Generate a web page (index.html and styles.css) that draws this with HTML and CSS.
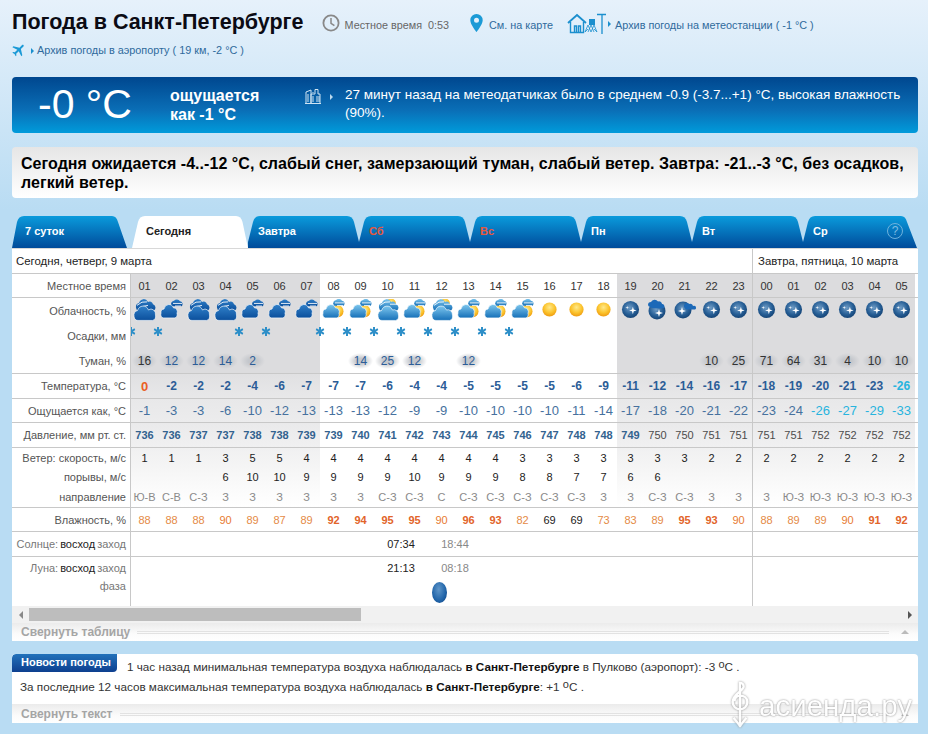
FILE: index.html
```html
<!DOCTYPE html>
<html lang="ru">
<head>
<meta charset="utf-8">
<title>Погода в Санкт-Петербурге</title>
<link rel="stylesheet" href="styles.css">
</head>
<body>
<svg class="defs" width="0" height="0" aria-hidden="true">
<defs>
<linearGradient id="gd" x1="0" y1="0" x2="0" y2="1"><stop offset="0" stop-color="#2f7fc8"/><stop offset="1" stop-color="#0b4f9c"/></linearGradient>
<linearGradient id="gl" x1="0" y1="0" x2="0" y2="1"><stop offset="0" stop-color="#7cc6ee"/><stop offset="1" stop-color="#1670b8"/></linearGradient>
<radialGradient id="gs" cx=".5" cy=".35" r=".65"><stop offset="0" stop-color="#ffe98a"/><stop offset=".6" stop-color="#fbc32c"/><stop offset="1" stop-color="#ee9a10"/></radialGradient>
<radialGradient id="gm" cx=".45" cy=".4" r=".65"><stop offset="0" stop-color="#6f9cc6"/><stop offset=".6" stop-color="#265e95"/><stop offset="1" stop-color="#123f70"/></radialGradient>
<symbol id="cb" viewBox="0 2.500 24 19" preserveAspectRatio="none">
<path fill="url(#gd)" d="M3 10a3.500 3.500 0 0 1 3-4 5 5 0 0 1 9-1 3.500 3.500 0 0 1 5 2 3 3 0 0 1 1 5.500H4z"/>
<path fill="none" stroke="#fff" stroke-width=".8" d="M4 8q5-4 10-3M7 11q3-3 8-3"/>
<path fill="url(#gd)" stroke="#fff" stroke-width=".6" d="M1 17.500a4 4 0 0 1 3.500-5 6 6 0 0 1 11-.5 4.500 4.500 0 0 1 7 4.500 3.500 3.500 0 0 1-3 4.500H5a4 4 0 0 1-4-3.500z"/>
</symbol>
<symbol id="cs" viewBox="0 2 24 18" preserveAspectRatio="none">
<path fill="url(#gd)" d="M11 7a3.500 3.500 0 0 1 3-3.500 4 4 0 0 1 6 .5 2.500 2.500 0 0 1 1.500 4.500H12z"/>
<path fill="none" stroke="#fff" stroke-width=".8" d="M13 6h9M15 8.300h6"/>
<path fill="url(#gd)" stroke="#fff" stroke-width=".6" d="M1 15a3.500 3.500 0 0 1 3-4 5 5 0 0 1 9.500-1 3.500 3.500 0 0 1 3.500 5 3 3 0 0 1-2 4H3a3 3 0 0 1-2-4z"/>
</symbol>
<symbol id="ds" viewBox="0 2 24 18" preserveAspectRatio="none">
<circle cx="16" cy="13" r="5.500" fill="url(#gs)"/>
<path fill="url(#gl)" d="M11 6a3.500 3.500 0 0 1 3-3 4 4 0 0 1 6 .5 2.500 2.500 0 0 1 1.500 4.500H12z"/>
<path fill="none" stroke="#fff" stroke-width=".8" d="M13 5.500h9M15 7.800h6"/>
<path fill="url(#gl)" stroke="#fff" stroke-width=".6" d="M1 15a3.500 3.500 0 0 1 3-4 5 5 0 0 1 9.500-1 3.500 3.500 0 0 1 3.500 5 3 3 0 0 1-2 4H3a3 3 0 0 1-2-4z"/>
</symbol>
<symbol id="db" viewBox="0 2.500 24 19" preserveAspectRatio="none">
<circle cx="15" cy="7" r="5" fill="url(#gs)"/>
<path fill="url(#gl)" d="M3 10a3.500 3.500 0 0 1 3-4 5 5 0 0 1 9-1 3.500 3.500 0 0 1 5 2 3 3 0 0 1 1 5.500H4z"/>
<path fill="none" stroke="#fff" stroke-width=".8" d="M4 8q5-4 10-3M14 7h8"/>
<path fill="url(#gl)" stroke="#fff" stroke-width=".6" d="M2 17.500a4 4 0 0 1 3.500-5 6 6 0 0 1 11-.5 4.500 4.500 0 0 1 6 4.500 3.500 3.500 0 0 1-3 4.500H6a4 4 0 0 1-4-3.500z"/>
</symbol>
<symbol id="sun" viewBox="0 0 18 18"><circle cx="9" cy="9" r="7.500" fill="url(#gs)"/></symbol>
<symbol id="mn" viewBox="0 0 20 20">
<circle cx="10" cy="10" r="9" fill="url(#gm)"/>
<path fill="#fff" d="M12.500 7l.9 3.100 3.100.9-3.100.9-.9 3.100-.9-3.100-3.100-.9 3.100-.9zM6.500 6l.4 1.600 1.600.4-1.600.4-.4 1.600-.4-1.600L4.500 8l1.600-.4z"/>
</symbol>
<symbol id="mc" viewBox="0 0 24 22">
<circle cx="11" cy="12" r="8.500" fill="url(#gm)"/>
<path fill="#fff" d="M13 10l.9 3.100 3.100.9-3.100.9-.9 3.100-.9-3.100-3.100-.9 3.100-.9z"/>
<path fill="#1c69b8" d="M2 6a3 3 0 0 1 3-3 4 4 0 0 1 7-.5 3 3 0 0 1 4 2.500 2.500 2.500 0 0 1 2 4l-3 .5-9-.5-2-1a2.500 2.500 0 0 1-2-2z"/>
</symbol>
<symbol id="ms" viewBox="0 0 24 20">
<circle cx="10" cy="11" r="8.500" fill="url(#gm)"/>
<path fill="#fff" d="M9 8l.9 3.100 3.100.9-3.100.9-.9 3.100-.9-3.100-3.100-.9 3.100-.9z"/>
<path fill="#1c69b8" d="M11 8a3 3 0 0 1 5-3 3 3 0 0 1 4 2 2 2 0 0 1 3 2 1.500 1.500 0 0 1-2 1.500h-8z"/>
</symbol>
<symbol id="fl" viewBox="0 0 9 9">
<path fill="none" stroke="#2e8fc8" stroke-width="2" d="M4.500 0v9M.6 2.200l7.800 4.600M.6 6.800l7.800-4.600"/>
</symbol>
</defs>
</svg>

<div class="page">
  <header class="head-main">
    <h1 class="title">Погода в Санкт-Петербурге</h1>
    <svg class="i-clock" viewBox="0 0 18 18"><circle cx="9" cy="9" r="7.600" fill="none" stroke="#888" stroke-width="1.800"/><path d="M9 4v5.300l3.400 2.400" fill="none" stroke="#888" stroke-width="1.500"/></svg>
    <span class="local">Местное время &nbsp;0:53</span>
    <svg class="i-pin" viewBox="0 0 13 18"><path fill="#1b9ad6" fill-rule="evenodd" d="M6.500 0a6.200 6.200 0 0 1 6.200 6.200C12.700 10.500 6.500 18 6.500 18S.3 10.500.3 6.200A6.200 6.200 0 0 1 6.500 0zm0 3.700a2.500 2.500 0 1 0 0 5 2.500 2.500 0 0 0 0-5z"/></svg>
    <a class="lnk map">См. на карте</a>
    <svg class="i-house" viewBox="0 0 40 22" fill="none" stroke="#1b8fce"><path stroke-width="1.800" d="M1 11l9-8 9 8"/><path stroke-width="1.400" d="M3.500 10v10.500h13V10M7.500 20v-6h2v6M11.500 20v-6h2v6"/><path fill="#1b8fce" stroke="none" d="M22 7h6v6h-6z"/><path stroke-width=".8" d="M18 20l3-7 3 7M21 20l3-7 3 7M24 20l3-7 3 7M18 20l3-3M30 20l-3-3"/><path stroke-width="1.300" d="M35 2v20M30 2.500h9"/></svg>
    <span class="tri"></span>
    <a class="lnk">Архив погоды на метеостанции ( -1 °C )</a>
  </header>
  <div class="head-sub">
    <svg class="i-plane" viewBox="0 0 24 24"><path fill="#1b9ad6" transform="rotate(45 12 12)" d="M21 16v-2l-8-5V3.500c0-.83-.67-1.500-1.500-1.500S10 2.670 10 3.500V9l-8 5v2l8-2.500V19l-2 1.500V22l3.500-1 3.500 1v-1.500L13 19v-5.500l8 2.500z"/></svg>
    <span class="tri"></span>
    <a class="lnk">Архив погоды в аэропорту ( 19 км, -2 °C )</a>
  </div>

  <section class="now">
    <div class="now-temp">-0 °C</div>
    <div class="now-feels">ощущается<br>как -1 °C</div>
    <svg class="i-bld" viewBox="0 0 16 16" fill="none" stroke="#cfe4f3" stroke-width="1"><path d="M1 15.500V4l5-2v13.500M6 15.500V6h4V1.500h3V6h2v9.500zM0 15.500h16M3 6v8M8 8v6M12 8v6M14 8v6M8 4v1"/></svg>
    <span class="tri tri-w"></span>
    <div class="now-text">27 минут назад на метеодатчиках было в среднем -0.9 (-3.7...+1) °C, высокая влажность (90%).</div>
  </section>

  <section class="summary">Сегодня ожидается -4..-12 °C, слабый снег, замерзающий туман, слабый ветер. Завтра: -21..-3 °C, без осадков, легкий ветер.</section>

  <nav class="tabs">
    <div class="tab tab-first">7 суток</div>
    <div class="tab tab-active">Сегодня</div>
    <div class="tab">Завтра</div>
    <div class="tab red">Сб</div>
    <div class="tab red">Вс</div>
    <div class="tab">Пн</div>
    <div class="tab">Вт</div>
    <div class="tab tab-last"><span>Ср</span><span class="help">?</span></div>
  </nav>

  <section class="table">
    <div class="dates"><div class="d1">Сегодня, четверг, 9 марта</div><div class="d2">Завтра, пятница, 10 марта</div></div>

    <div class="row hours line"><span class="lab">Местное время</span><span>01</span><span>02</span><span>03</span><span>04</span><span>05</span><span>06</span><span>07</span><span>08</span><span>09</span><span>10</span><span>11</span><span>12</span><span>13</span><span>14</span><span>15</span><span>16</span><span>17</span><span>18</span><span>19</span><span>20</span><span>21</span><span>22</span><span>23</span><span></span><span>00</span><span>01</span><span>02</span><span>03</span><span>04</span><span>05</span></div>

    <div class="row clouds"><span class="lab">Облачность, %</span>
      <span><svg class="big"><use href="#cb"/></svg></span><span><svg class="sm"><use href="#cs"/></svg></span><span><svg class="big"><use href="#cb"/></svg></span><span><svg class="big"><use href="#cb"/></svg></span><span><svg class="sm"><use href="#cs"/></svg></span><span><svg class="sm"><use href="#cs"/></svg></span><span><svg class="sm"><use href="#cs"/></svg></span>
      <span><svg class="sm"><use href="#ds"/></svg></span><span><svg class="sm"><use href="#ds"/></svg></span><span><svg class="big"><use href="#db"/></svg></span><span><svg class="sm"><use href="#ds"/></svg></span><span><svg class="big"><use href="#db"/></svg></span><span><svg class="sm"><use href="#ds"/></svg></span><span><svg class="sm"><use href="#ds"/></svg></span><span><svg class="sm"><use href="#ds"/></svg></span>
      <span><svg class="sun"><use href="#sun"/></svg></span><span><svg class="sun"><use href="#sun"/></svg></span><span><svg class="sun"><use href="#sun"/></svg></span>
      <span><svg class="moon"><use href="#mn"/></svg></span><span><svg class="big"><use href="#mc"/></svg></span><span><svg class="sm"><use href="#ms"/></svg></span><span><svg class="moon"><use href="#mn"/></svg></span><span><svg class="moon"><use href="#mn"/></svg></span><span></span>
      <span><svg class="moon"><use href="#mn"/></svg></span><span><svg class="moon"><use href="#mn"/></svg></span><span><svg class="moon"><use href="#mn"/></svg></span><span><svg class="moon"><use href="#mn"/></svg></span><span><svg class="moon"><use href="#mn"/></svg></span><span><svg class="moon"><use href="#mn"/></svg></span>
    </div>

    <div class="row precip"><span class="lab">Осадки, мм</span>
      <span><svg class="fl"><use href="#fl"/></svg></span><span><svg class="fl"><use href="#fl"/></svg></span><span></span><span></span><span><svg class="fl"><use href="#fl"/></svg></span><span><svg class="fl"><use href="#fl"/></svg></span><span></span>
      <span><svg class="fl"><use href="#fl"/></svg></span><span><svg class="fl"><use href="#fl"/></svg></span><span><svg class="fl"><use href="#fl"/></svg></span><span><svg class="fl"><use href="#fl"/></svg></span><span><svg class="fl"><use href="#fl"/></svg></span><span><svg class="fl"><use href="#fl"/></svg></span><span><svg class="fl"><use href="#fl"/></svg></span><span><svg class="fl"><use href="#fl"/></svg></span>
      <span></span><span></span><span></span><span></span><span></span><span></span><span></span><span></span><span></span><span></span><span></span><span></span><span></span><span></span><span></span>
    </div>

    <div class="row fogs line"><span class="lab">Туман, %</span><span><b class="dk">16</b></span><span><b>12</b></span><span><b>12</b></span><span><b>14</b></span><span><b>2</b></span><span></span><span></span><span></span><span><b>14</b></span><span><b>25</b></span><span><b>12</b></span><span></span><span><b>12</b></span><span></span><span></span><span></span><span></span><span></span><span></span><span></span><span></span><span><b class="dk">10</b></span><span><b class="dk">25</b></span><span></span><span><b class="dk">71</b></span><span><b class="dk">64</b></span><span><b class="dk">31</b></span><span><b class="dk">4</b></span><span><b class="dk">10</b></span><span><b class="dk">10</b></span></div>

    <div class="row temp line"><span class="lab">Температура, °C</span><span class="hot">0</span><span>-2</span><span>-2</span><span>-2</span><span>-4</span><span>-6</span><span>-7</span><span>-7</span><span>-7</span><span>-6</span><span>-4</span><span>-4</span><span>-5</span><span>-5</span><span>-5</span><span>-5</span><span>-6</span><span>-9</span><span>-11</span><span>-12</span><span>-14</span><span>-16</span><span>-17</span><span></span><span>-18</span><span>-19</span><span>-20</span><span>-21</span><span>-23</span><span class="ice">-26</span></div>

    <div class="row feels line"><span class="lab">Ощущается как, °C</span><span>-1</span><span>-3</span><span>-3</span><span>-6</span><span>-10</span><span>-12</span><span>-13</span><span>-13</span><span>-13</span><span>-12</span><span>-9</span><span>-9</span><span>-10</span><span>-10</span><span>-10</span><span>-10</span><span>-11</span><span>-14</span><span>-17</span><span>-18</span><span>-20</span><span>-21</span><span>-22</span><span></span><span>-23</span><span>-24</span><span class="ice">-26</span><span class="ice">-27</span><span class="ice">-29</span><span class="ice">-33</span></div>

    <div class="row press line"><span class="lab">Давление, мм рт. ст.</span><span>736</span><span>736</span><span>737</span><span>737</span><span>738</span><span>738</span><span>739</span><span>739</span><span>740</span><span>741</span><span>742</span><span>743</span><span>744</span><span>745</span><span>746</span><span>747</span><span>748</span><span>748</span><span>749</span><span class="lo">750</span><span class="lo">750</span><span class="lo">751</span><span class="lo">751</span><span></span><span class="lo">751</span><span class="lo">751</span><span class="lo">752</span><span class="lo">752</span><span class="lo">752</span><span class="lo">752</span></div>

    <div class="row wind w1"><span class="lab">Ветер: скорость, м/с</span><span>1</span><span>1</span><span>1</span><span>3</span><span>5</span><span>5</span><span>4</span><span>4</span><span>4</span><span>4</span><span>4</span><span>4</span><span>4</span><span>4</span><span>3</span><span>3</span><span>3</span><span>3</span><span>3</span><span>3</span><span>3</span><span>2</span><span>2</span><span></span><span>2</span><span>2</span><span>2</span><span>2</span><span>2</span><span>2</span></div>

    <div class="row wind w2"><span class="lab">порывы, м/с</span><span></span><span></span><span></span><span>6</span><span>10</span><span>10</span><span>9</span><span>9</span><span>9</span><span>9</span><span>10</span><span>9</span><span>9</span><span>9</span><span>8</span><span>8</span><span>7</span><span>7</span><span>6</span><span>6</span><span></span><span></span><span></span><span></span><span></span><span></span><span></span><span></span><span></span><span></span></div>

    <div class="row wind w3 line"><span class="lab">направление</span><span>Ю-В</span><span>С-В</span><span>С-З</span><span>З</span><span>З</span><span>З</span><span>З</span><span>З</span><span>З</span><span>С-З</span><span>С-З</span><span>С</span><span>С-З</span><span>С-З</span><span>С-З</span><span>С-З</span><span>С-З</span><span>З</span><span>З</span><span>С-З</span><span>С-З</span><span>З</span><span>З</span><span></span><span>З</span><span>Ю-З</span><span>Ю-З</span><span>Ю-З</span><span>Ю-З</span><span>Ю-З</span></div>

    <div class="row humid line"><span class="lab">Влажность, %</span><span>88</span><span>88</span><span>88</span><span class="h2">90</span><span>89</span><span>87</span><span>89</span><span class="h3">92</span><span class="h3">94</span><span class="h3">95</span><span class="h3">95</span><span class="h2">90</span><span class="h3">96</span><span class="h3">93</span><span>82</span><span class="dry">69</span><span class="dry">69</span><span>73</span><span>83</span><span>89</span><span class="h3">95</span><span class="h3">93</span><span class="h2">90</span><span></span><span>88</span><span>89</span><span>89</span><span class="h2">90</span><span class="h3">91</span><span class="h3">92</span></div>

    <div class="row astro line"><span class="lab"><em>Солнце:</em> восход <em>заход</em></span><span class="rise">07:34</span><span class="set">18:44</span><i class="div"></i></div>

    <div class="row astro moonrow"><span class="lab l1"><em>Луна:</em> восход <em>заход</em></span><span class="lab l2"><em>фаза</em></span><span class="rise">21:13</span><span class="set">08:18</span><i class="phase"></i><i class="div"></i></div>

    <div class="scroll"><span class="ar ar-l"></span><span class="thumb"></span><span class="ar ar-r"></span></div>
    <div class="fold"><span>Свернуть таблицу</span><i></i><span class="up"></span></div>
  </section>

  <section class="news">
    <div class="news-1"><span class="badge">Новости погоды</span><p>1 час назад минимальная температура воздуха наблюдалась <strong>в Санкт-Петербурге</strong> в Пулково (аэропорт): -3 <sup>o</sup>C .</p></div>
    <p class="news-2">За последние 12 часов максимальная температура воздуха наблюдалась <strong>в Санкт-Петербурге</strong>: +1 <sup>o</sup>C .</p>
    <div class="fold"><span>Свернуть текст</span><i></i><span class="up"></span></div>
  </section>
</div>

<div class="mark">
  <svg viewBox="0 0 24 56" fill="none" stroke="#fff" stroke-width="2.600"><path d="M12 54V6a4 4 0 0 1 4 4c0 5-12 8-12 17a8 8 0 0 0 16 0c0-5-4-7-8-7s-6 3-6 6"/><path d="M5 44l7 9 7-9"/></svg>
  <span>асиенда.ру</span>
</div>
</body>
</html>
```
FILE: styles.css
```css
* { box-sizing: border-box; }
html, body { margin: 0; height: 734px; overflow: hidden; }
body {
  font-family: "Liberation Sans", Arial, sans-serif;
  font-size: 11px;
  color: #333;
  background: linear-gradient(#e6f1fb 0, #b9dcf3 210px) no-repeat #b9dcf3;
  position: relative;
}
.defs { position: absolute; }
.page { width: 906px; margin-left: 12px; }

.head-main { display: flex; align-items: center; height: 37px; padding-top: 8px; }
.title { margin: -2px 0 0; font-size: 21.500px; line-height: 24px; font-weight: 700; color: #0b0b14; white-space: nowrap; }
.i-clock { width: 18px; height: 18px; margin-left: 18px; flex: none; }
.local { margin-left: 5px; color: #666; padding-top: 4px; font-size: 10.800px; }
.i-pin { width: 13px; height: 18px; margin-left: 21px; flex: none; }
.lnk { color: #2f6a9c; padding-top: 4px; font-size: 10.850px; }
.map { margin-left: 6px; }
.i-house { width: 40px; height: 22px; margin-left: 14px; flex: none; }
.tri { width: 0; height: 0; border: 3px solid transparent; border-left-color: #1b8fce; border-right: 0; margin: 2px 4px 0 1px; flex: none; }
.head-sub { display: flex; align-items: center; height: 19px; margin-top: 3px; }
.i-plane { width: 16px; height: 16px; margin-left: -1px; flex: none; }
.head-sub .tri { margin-left: 4px; margin-right: 3px; }
.head-sub .lnk { padding-top: 0; }

.now {
  display: flex; align-items: center; height: 56px; margin-top: 18px; border-radius: 4px; color: #fff;
  background: linear-gradient(#00478f, #0a6fb7 60%, #009bdb);
}
.now-temp { width: 132px; margin: -2px 0 0 26px; font-size: 41px; line-height: 48px; flex: none; }
.now-feels { width: 135px; font-size: 16px; line-height: 19px; font-weight: 700; flex: none; }
.i-bld { width: 16px; height: 16px; flex: none; margin-top: -18px; }
.tri-w { border-left-color: #bcd9ee; margin: -16px 0 0 9px; }
.now-text { width: 565px; margin: -2px 0 0 12px; font-size: 13.500px; line-height: 18px; }

.summary {
  height: 51px; margin-top: 14px; padding: 7px 0 7px 9px; border-radius: 4px;
  font-size: 16px; line-height: 19px; font-weight: 700; color: #000; letter-spacing: .05px;
  background: linear-gradient(#e6e6e6, #fff);
}

.tabs { display: flex; height: 32px; margin-top: 18px; }
.tab {
  width: 111px; height: 32px; flex: none; padding: 0 0 2px 10px; display: flex; align-items: center;
  font-size: 11px; font-weight: 700; color: #fff;
  background: linear-gradient(#0a9bdc, #004b9a);
  clip-path: path("M0 32V26L5 6Q6.500 0 12 0H99Q104.500 0 106 6L111 26V32Z");
}
.tab.red { color: #e8583c; }
.tab-first {
  width: 115px; padding-left: 13px;
  clip-path: path("M0 32L5 6Q6.500 0 12 0H100Q104.500 0 106 6L115 32Z");
}
.tab-active {
  width: 116px; margin-left: 5px; padding-left: 14px; color: #222; background: #fff;
  clip-path: path("M0 32L6 6Q7.500 0 13 0H104Q109 0 110.500 6L116 32Z");
}
.tab-last {
  width: 114px; justify-content: space-between; padding-right: 14px;
  clip-path: path("M0 32V26L5 6Q6.500 0 12 0H98Q102.500 0 104 6L114 32Z");
}
.help {
  width: 16px; height: 16px; border: 1px solid #6fb2dc; border-radius: 50%; text-align: center;
  font-size: 12px; line-height: 14px; font-weight: 400; color: #7fbce2;
}

.table { background: #fff; overflow: hidden; }
.dates { display: flex; height: 26px; border-bottom: 1px solid #c8c8c8; border-top: 1px solid #d8d8d8; font-size: 11.400px; color: #222; }
.d1 { width: 741px; padding: 3px 0 0 4px; line-height: 18px; border-right: 1px solid #c8c8c8; }
.d2 { padding: 3px 0 0 5px; line-height: 18px; }

.row {
  --n: transparent;
  display: grid;
  grid-template-columns: 119px repeat(23, 27px) 1px repeat(6, 27px);
  font-size: 11px;
}
.row > span { display: flex; align-items: center; justify-content: center; white-space: nowrap; }
.row > .lab {
  justify-content: flex-end; padding-right: 4px; border-right: 1px solid #c8c8c8; color: #555;
  background: #fff; position: relative; z-index: 1;
}
.row > span:nth-child(n+2):nth-child(-n+8),
.row > span:nth-child(n+20) { background: var(--n); }
.row > span:nth-child(25) { background: #c8c8c8; }
.line { border-bottom: 1px solid #c8c8c8; }

.hours { height: 24px; --n: #dcdcde; color: #333; }
.clouds { height: 25px; --n: #dcdcde; }
.precip { height: 25px; --n: #dcdcde; }
.fogs { height: 26px; --n: #dcdcde; }
.temp { height: 25px; --n: linear-gradient(#e0e0e2, #e8e8e9); font-size: 12px; font-weight: 700; color: #2c5d97; }
.feels { height: 24px; --n: linear-gradient(#e8e8e9, #ececed); font-size: 13px; color: #46719e; }
.press { height: 25px; --n: linear-gradient(#eaeaeb, #f0f0f1); font-weight: 700; color: #33628f; }
.w1 { height: 19px; --n: linear-gradient(#f0f0f1, #f5f5f5); color: #222; }
.w2 { height: 19px; --n: linear-gradient(#f5f5f5, #fafafa); color: #222; }
.w3 { height: 22px; --n: linear-gradient(#fafafa, #fff); color: #8a8a8a; }
.humid { height: 24px; color: #e58a46; }
.temp .lab, .feels .lab, .press .lab { font-size: 11px; font-weight: 400; color: #555; }
.press .lo { font-weight: 400; color: #4c4c4c; }
.ice { color: #28b4de; }
.temp .hot { color: #ea5f24; font-size: 13px; }
.humid .h2 { color: #e87a30; }
.humid .h3 { color: #e2642a; font-weight: 700; }
.humid .dry { color: #222; }

.clouds svg { display: block; flex: none; margin-top: 1px; }
.clouds .big { width: 24px; height: 22px; margin-top: -2px; }
.clouds .sm { width: 24px; height: 20px; margin-top: -3px; }
.clouds .sun { width: 17px; height: 17px; margin-top: -2px; }
.clouds .moon { width: 19px; height: 19px; margin-top: -2px; }
.precip > span { align-items: flex-start; }
.precip > .lab { align-items: center; padding-top: 1px; }
.fl { width: 9px; height: 9px; flex: none; margin-top: 4px; transform: translateX(-13.500px); }
.fogs b {
  display: block; width: 25px; height: 16px; line-height: 16px; text-align: center; font-weight: 400; font-size: 12px; color: #2c5d97;
  background: radial-gradient(closest-side, #c4c7cc 35%, rgba(200, 203, 208, 0));
}
.fogs b.dk { color: #333; }

.astro { height: 25px; color: #777; }
.astro .lab { color: #222; gap: 2px; }
.astro em { font-style: normal; color: #777; }
.astro .rise { grid-column: 11 / 13; grid-row: 1; color: #222; }
.astro .set { grid-column: 13 / 15; grid-row: 1; color: #888; }
.astro .div { grid-column: 25; grid-row: 1; background: #c8c8c8; }
.moonrow { height: 49px; grid-template-rows: 22px 27px; }
.moonrow .l1 { grid-column: 1; grid-row: 1; }
.moonrow .l2 { grid-column: 1; grid-row: 2; align-items: flex-start; padding-top: 1px; }
.moonrow .div { grid-row: 1 / 3; }
.phase {
  grid-column: 13; grid-row: 2; justify-self: start; align-self: start; width: 15px; height: 21px; margin: 3px 0 0 4px; border-radius: 50%;
  background: radial-gradient(ellipse at 45% 35%, #5f96c9, #1f63a8 60%, #143f78);
}

.scroll { display: flex; align-items: center; height: 17px; background: #f1f1f1; padding: 0 6px 0 7px; }
.thumb { width: 332px; height: 13px; margin-left: 6px; background: #bdbdbd; }
.ar { width: 0; height: 0; border: 4px solid transparent; }
.ar-l { border-left: 0; border-right-color: #888; }
.ar-r { border-right: 0; border-left-color: #555; margin-left: auto; }
.fold {
  display: flex; align-items: center; height: 18px; padding: 0 9px; gap: 7px;
  background: linear-gradient(#ebebeb, #fbfbfb 60%, #fff);
  font-size: 12px; font-weight: 700; color: #a5a5a5;
}
.fold i { flex: 1; height: 3px; border-top: 1px solid #e2e2e2; border-bottom: 1px solid #e2e2e2; margin-top: 1px; }
.up { width: 0; height: 0; border: 4px solid transparent; border-bottom-color: #bbb; border-top: 0; margin-left: 5px; }

.news { height: 69px; margin-top: 13px; border-radius: 4px 4px 0 0; background: #fff; font-size: 11.700px; color: #333; display: flex; flex-direction: column; overflow: hidden; }
.news p { margin: 0; }
.news strong { color: #111; }
.news sup { font-size: 11px; line-height: 0; vertical-align: 3px; }
.news-1 { display: flex; align-items: flex-start; gap: 10px; height: 21px; }
.news-1 p { padding-top: 5px; line-height: 15px; }
.badge {
  flex: none; width: 105px; height: 18px; line-height: 17px; padding-left: 9px; color: #fff; font-size: 11px; font-weight: 700; white-space: nowrap; border-radius: 4px 0 4px 0;
  background: linear-gradient(#2272bb, #0d3f8f);
}
.news-2 { padding: 4px 0 0 8px; line-height: 15px; height: 29px; }
.news .fold { height: 19px; margin-top: 0; }

.mark { position: absolute; left: 729px; top: 676px; display: flex; align-items: flex-end; gap: 8px; color: #fff; pointer-events: none; }
.mark svg { width: 22px; height: 54px; filter: drop-shadow(0 0 1px #888); opacity: .9; }
.mark span { font-size: 29.500px; line-height: 44px; margin-bottom: 2px; text-shadow: 0 0 2px #777; opacity: .95; }
```
